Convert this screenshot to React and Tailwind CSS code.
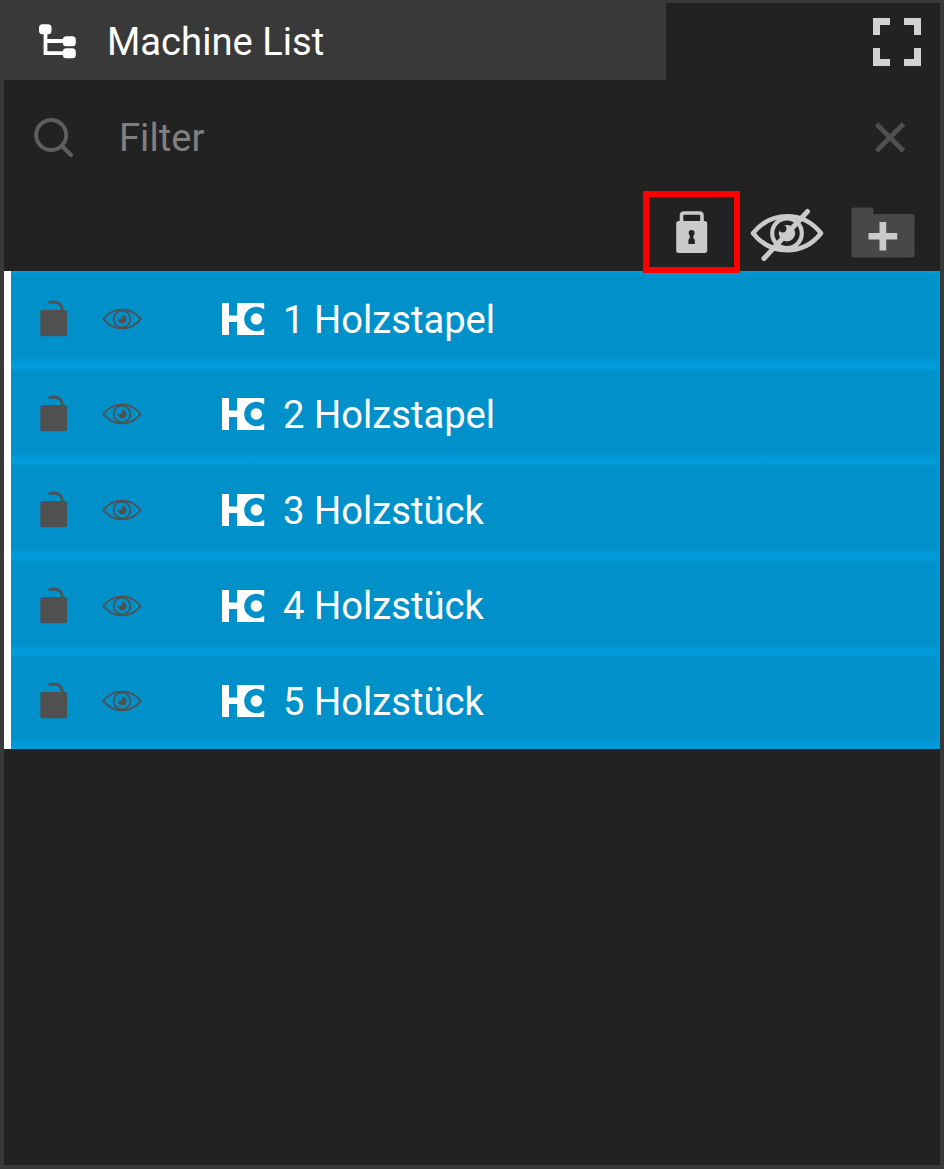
const machines = ["1 Holzstapel", "2 Holzstapel", "3 Holzstück", "4 Holzstück", "5 Holzstück"];

function TreeIcon() {
  return (
    <svg className="h-9 w-10 shrink-0" viewBox="0 0 40 36" fill="#fff">
      <path d="M7.500 7v22.200h18M7.500 17h18" fill="none" stroke="#fff" strokeWidth="3.800" />
      <rect x="1" y="0.200" width="12.500" height="10" rx="3.500" />
      <rect x="24.800" y="12.300" width="13" height="10" rx="3.500" />
      <rect x="24.800" y="24.300" width="13" height="10" rx="3.500" />
    </svg>
  );
}

function ExpandIcon() {
  return (
    <svg className="size-12" viewBox="0 0 48 48" fill="#d2d2d2">
      <path d="M0 0h17v7H7v10H0zM31 0h17v17h-7V7H31zM0 30h7v11h10v7H0zM41 30h7v18H31v-7h10z" />
    </svg>
  );
}

function SearchIcon() {
  return (
    <svg className="size-10 shrink-0" viewBox="0 0 40 40" fill="none" stroke="#5e5e5e" strokeLinecap="round">
      <circle cx="17.200" cy="17" r="15" strokeWidth="4" />
      <path d="M28.500 28.500l8.500 8.500" strokeWidth="4.200" />
    </svg>
  );
}

function LockIcon() {
  return (
    <svg className="h-[42px] w-8" viewBox="0 0 32 42">
      <path d="M5.500 13V4.500q0-2.500 2.500-2.500h15.500q2.500 0 2.500 2.500V13" fill="none" stroke="#cacaca" strokeWidth="3.600" />
      <rect x="0.200" y="10" width="31" height="32" rx="2.500" fill="#cacaca" />
      <circle cx="15.600" cy="22" r="3" fill="#222" />
      <path d="M14 24h3.200l.3 3 1.300 2v4h-6.400v-4l1.300-2z" fill="#222" />
    </svg>
  );
}

function HiddenIcon() {
  return (
    <svg className="h-[54px] w-[74px]" viewBox="0 0 74 54" fill="none" stroke="#cacaca">
      <path d="M3 26.200C21 3.500 53 3.500 71 26.200C53 48.800 21 48.800 3 26.200Z" strokeWidth="4.600" strokeLinejoin="round" />
      <circle cx="37" cy="26.200" r="14.800" strokeWidth="4.200" />
      <circle cx="37" cy="26.200" r="8.200" fill="#cacaca" stroke="none" />
      <circle cx="32.800" cy="21.800" r="3.700" fill="#222" stroke="none" />
      <path d="M14 51.500L57.500 4.500" strokeWidth="5" strokeLinecap="round" />
    </svg>
  );
}

function AddFolderIcon() {
  return (
    <svg className="h-[52px] w-16" viewBox="0 0 64 52">
      <path d="M2.500.5h18q2 0 2 2V7h38.500q2.500 0 2.500 2.500v38q0 3-3 3h-57q-3 0-3-3V3q0-2.500 2-2.500z" fill="#484848" />
      <path d="M28.500 15h6.700v11h11v6.500h-11v11h-6.700v-11h-11V26h11z" fill="#cacaca" />
    </svg>
  );
}

function UnlockIcon() {
  return (
    <svg className="h-[38px] w-7 shrink-0" viewBox="0 0 28 38">
      <path d="M9.500 2.500C17 .7 22.500 3.700 22.500 12" fill="none" stroke="#505050" strokeWidth="2.800" strokeLinecap="round" />
      <rect x="0.300" y="10" width="26.700" height="26.200" rx="2" fill="#505050" />
    </svg>
  );
}

function EyeIcon() {
  return (
    <svg className="h-[22px] w-10 shrink-0" viewBox="0 0 40 22" fill="none" stroke="#505050">
      <path d="M1.300 11C11-1.600 29-1.600 38.700 11C29 23.600 11 23.600 1.300 11Z" strokeWidth="1.800" strokeLinejoin="round" />
      <circle cx="20" cy="11" r="8.400" strokeWidth="1.700" />
      <path d="M20.500 7.200A4 4 0 1 1 16.200 11.500Q20.500 12 20.500 7.200Z" fill="#505050" strokeWidth=".6" />
    </svg>
  );
}

function BrandIcon() {
  return (
    <svg className="h-8 w-[43px] shrink-0" viewBox="0 0 43 32">
      <path d="M0 0h7v12.500h8V0h27.200v6.400A12.300 12.300 0 1 0 42.200 25.600V32H15V19H7v13H0z" fill="#fff" />
      <circle cx="34.300" cy="16" r="5.700" fill="#fff" />
    </svg>
  );
}

function MachineRow({ name }) {
  return (
    <li className="flex h-[95.6px] border-l-[7px] border-white bg-[linear-gradient(to_bottom,#009fde_0px,#0095d0_3px,#0091ca_5px,#0091ca_87px,#0099d5_89px,#009ad7_93px,#009fde_95.6px)]">
      <div className="flex flex-1 items-center bg-[linear-gradient(to_right,transparent_calc(100%_-_5px),#009ad7)] pl-[29px] text-[38.2px]">
        <UnlockIcon />
        <span className="ml-[34px] flex"><EyeIcon /></span>
        <span className="ml-[80px] flex"><BrandIcon /></span>
        <span className="ml-[18px] whitespace-nowrap pt-[2px] leading-none text-white">{name}</span>
      </div>
    </li>
  );
}

export default function App() {
  return (
    <main className="flex h-[1169px] w-[944px] flex-col border-x-4 border-t-[3px] border-b-4 border-[#393939] bg-[#222] font-[Roboto,sans-serif]">
      <header className="flex h-[77px] shrink-0 justify-between">
        <div className="flex w-[662px] items-center bg-[#393939] pl-[34px]">
          <TreeIcon />
          <h1 className="ml-[29px] whitespace-nowrap pt-[2px] text-[38.2px] leading-none text-white">Machine List</h1>
        </div>
        <button aria-label="Expand" className="mr-[19px] flex items-center"><ExpandIcon /></button>
      </header>
      <div className="flex h-[111px] shrink-0 items-center pl-[30px] pt-[5px]">
        <SearchIcon />
        <span className="ml-[45px] flex-1 text-[38.2px] leading-none text-[#808080]">Filter</span>
        <button aria-label="Clear" className="mr-[34px]">
          <svg className="size-8" viewBox="0 0 32 32" stroke="#505050" strokeWidth="4.800">
            <path d="M2.500 2L29.500 29M29.500 2L2.500 29" />
          </svg>
        </button>
      </div>
      <div className="flex h-20 shrink-0 items-start justify-end pr-[25px]">
        <button aria-label="Lock all" className="z-10 mr-[10px] flex h-[82px] w-[97px] items-center justify-center border-[6px] border-[#ff0000]"><LockIcon /></button>
        <button aria-label="Hide all" className="mr-[27px] mt-4"><HiddenIcon /></button>
        <button aria-label="Add folder" className="mt-4"><AddFolderIcon /></button>
      </div>
      <ul className="shrink-0">
        {machines.map((name) => <MachineRow key={name} name={name} />)}
      </ul>
    </main>
  );
}
